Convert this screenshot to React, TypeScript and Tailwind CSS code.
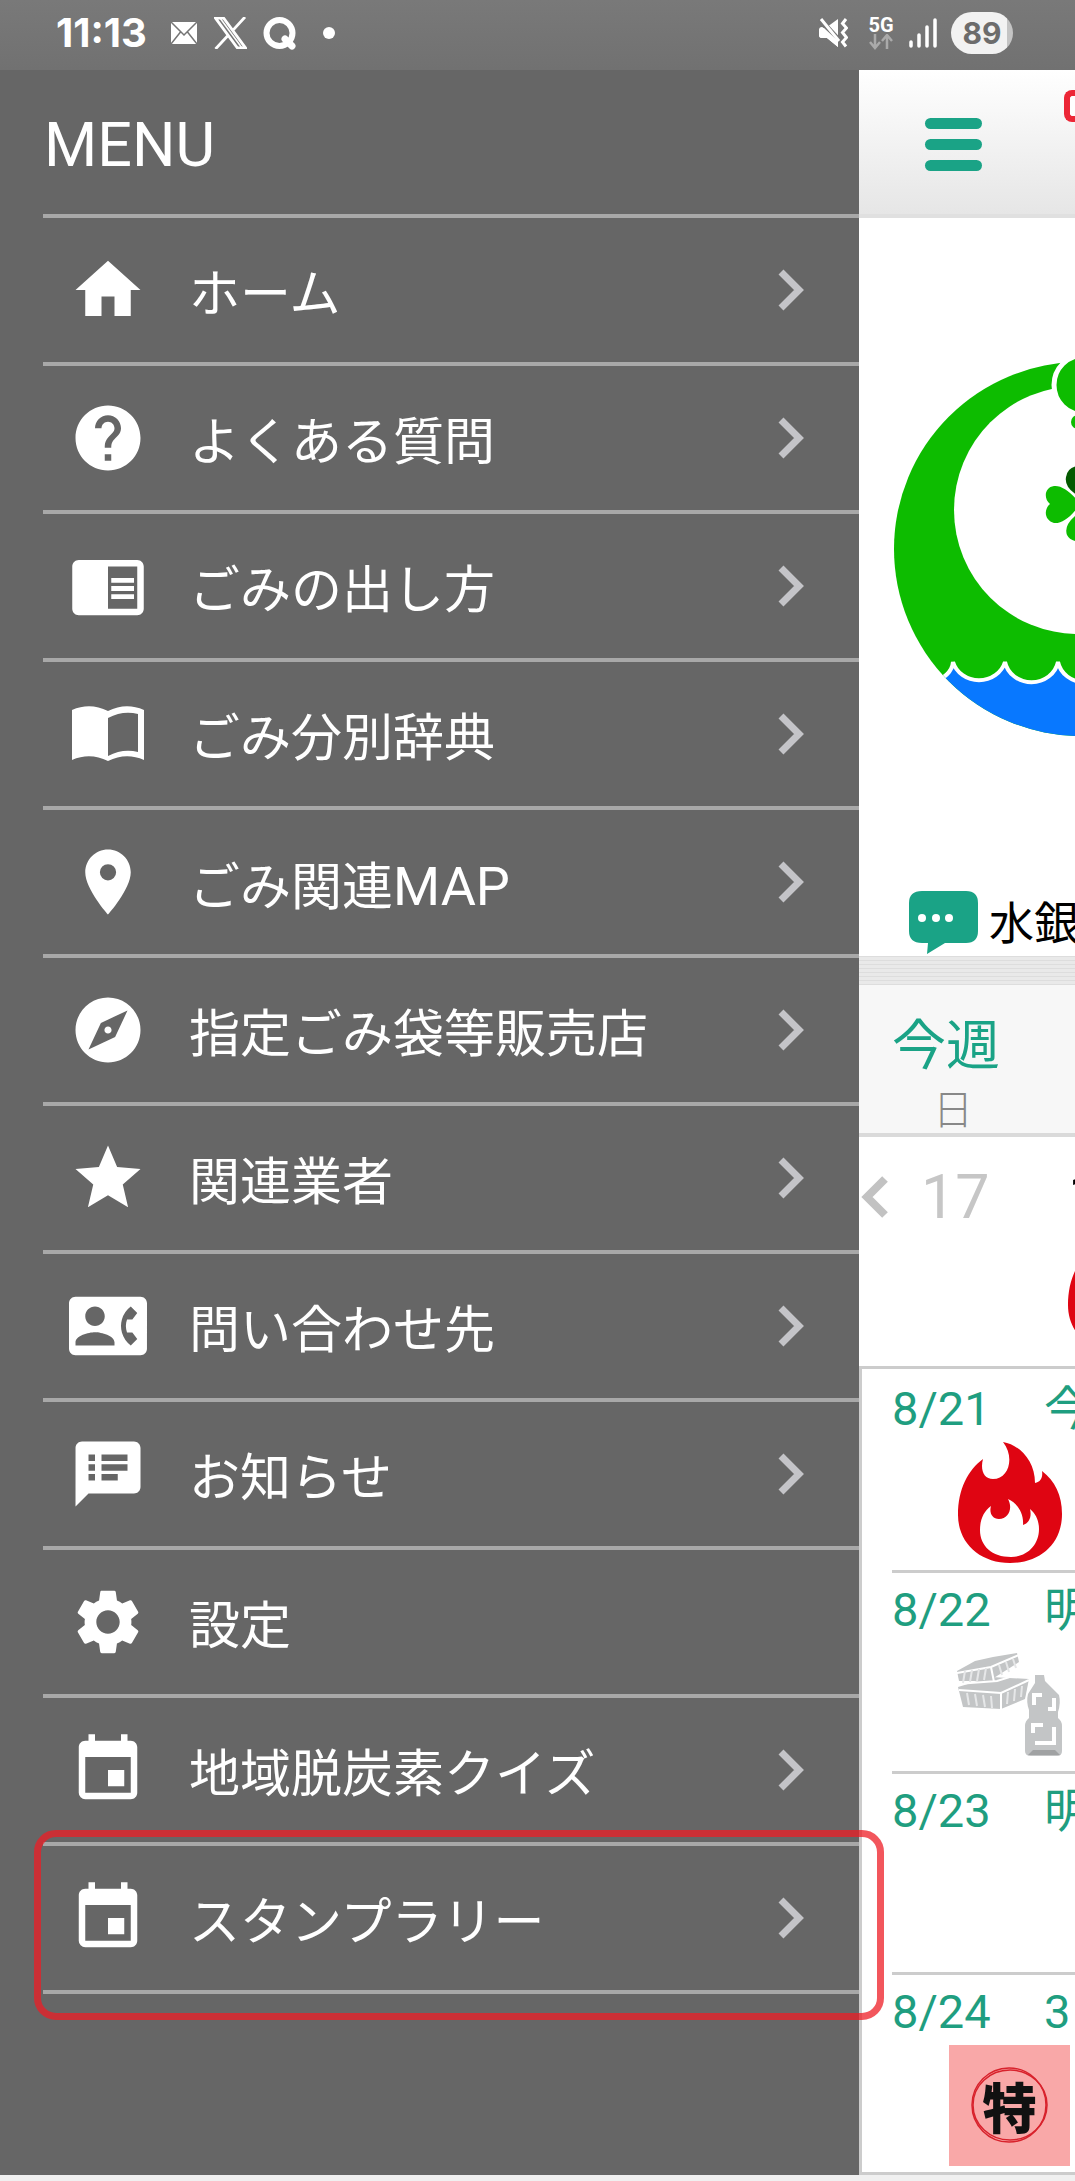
import type { ComponentType, ReactNode } from "react";
import {
  MdChromeReaderMode,
  MdContactPhone,
  MdEvent,
  MdExplore,
  MdHelp,
  MdHome,
  MdPlace,
  MdSettings,
  MdSpeakerNotes,
  MdStar,
} from "react-icons/md";

type MenuItem = {
  icon: ComponentType<{ className?: string }>;
  label: ReactNode;
  arrow?: boolean;
  highlight?: boolean;
};

// open book with the left page filled
const BookIcon = ({ className }: { className?: string }) => {
  return (
    <svg viewBox="-3 -11 78 78" className={className}>
      <path
        d="M0 4Q18 -4 36 5Q54 -4 72 4V54Q54 46 36 55Q18 46 0 54zM36 12V50Q51 42 66 46V8Q51 4 36 12z"
        fill="currentColor"
        fillRule="evenodd"
      />
    </svg>
  );
};

const menuItems: MenuItem[] = [
  { icon: MdHome, label: "ホーム" },
  { icon: MdHelp, label: "よくある質問" },
  { icon: MdChromeReaderMode, label: "ごみの出し方" },
  { icon: BookIcon, label: "ごみ分別辞典" },
  {
    icon: MdPlace,
    label: (
      <>
        ごみ関連<span className="text-[54px]">MAP</span>
      </>
    ),
  },
  { icon: MdExplore, label: "指定ごみ袋等販売店" },
  { icon: MdStar, label: "関連業者" },
  { icon: MdContactPhone, label: "問い合わせ先" },
  { icon: MdSpeakerNotes, label: "お知らせ" },
  { icon: MdSettings, label: "設定", arrow: false },
  { icon: MdEvent, label: "地域脱炭素クイズ" },
  { icon: MdEvent, label: "スタンプラリー", highlight: true },
];

const StatusBar = () => {
  return (
    <header className="flex h-[70px] items-center bg-linear-to-b from-[#797979] to-[#717171] pb-1 pl-14 pr-[62px] text-white">
      <time className="font-['Inter',sans-serif] text-[40px] leading-none font-bold">
        11:13
      </time>
      <svg viewBox="0 0 26 22" className="ml-6 h-[22px] w-[26px]">
        <path d="M0 0h26v22H0z" fill="#fff" />
        <path
          d="M0 0l13 13L26 0M0 22l9.500-12M26 22l-9.500-12"
          fill="none"
          stroke="#757575"
          strokeWidth="1.500"
        />
      </svg>
      <svg viewBox="0 0 33 32" className="ml-[17px] h-8 w-[33px]">
        <path
          d="M1.500 1.200h8.200l21.800 29.600h-8.200zM31 0L18.600 13.600M14.200 18.200L1.500 32"
          fill="none"
          stroke="#fff"
          strokeWidth="2.800"
        />
        <path d="M6 1l22 30" stroke="#fff" strokeWidth="1.500" />
      </svg>
      <svg viewBox="0 0 33 33" className="ml-4 h-[33px] w-[33px]">
        <circle
          cx="16.500"
          cy="16"
          r="13"
          fill="none"
          stroke="#fff"
          strokeWidth="6"
        />
        <path
          d="M22 22l7 7"
          stroke="#fff"
          strokeWidth="7"
          strokeLinecap="round"
        />
      </svg>
      <span className="ml-[27px] h-3 w-3 rounded-full bg-white" />

      <svg viewBox="0 0 30 30" className="ml-auto h-[30px] w-[30px]">
        <path d="M1 12q0-3 3-3h5L20 1v28L9 20H4q-3 0-3-3z" fill="#fff" />
        <path d="M1 1l22 24" stroke="#757575" strokeWidth="6" />
        <path d="M3 1l18 22" stroke="#fff" strokeWidth="3" />
        <path d="M1 12q2-3 5-2l14 13v6L9 20H4q-3 0-3-3z" fill="#fff" />
        <path
          d="M28 1l-3.500 4.500 4 4.500-4 4.500 4 5-4 4.500 3.500 4.500"
          fill="none"
          stroke="#fff"
          strokeWidth="3"
        />
      </svg>
      <div className="ml-5 flex w-[26px] flex-col items-center">
        <span className="font-['Roboto',sans-serif] text-[20px] leading-[18px] font-bold">
          5G
        </span>
        <svg viewBox="0 0 24 16" className="h-4 w-6">
          <path
            d="M6 0v14M1 8l5 6 5-6M18 15V1M13 7l5-6 5 6"
            fill="none"
            stroke="#aaa"
            strokeWidth="2.500"
          />
        </svg>
      </div>
      <svg viewBox="0 0 28 30" className="ml-[15px] h-[30px] w-7">
        <path
          d="M2 24v4M10 17v11M18 9v19M26 2v26"
          stroke="#fff"
          strokeWidth="3.500"
          strokeLinecap="round"
        />
      </svg>
      <span className="ml-[14px] flex h-[42px] w-[62px] items-center justify-center rounded-full bg-linear-to-r from-[#f2f2f2] from-90% to-[#c4c4c4] to-90% font-['Inter',sans-serif] text-[30px] leading-none font-bold text-[#6c6c6c]">
        89
      </span>
    </header>
  );
};

const MenuRow = ({ icon: Icon, label, arrow = true, highlight }: MenuItem) => {
  return (
    <li className="relative border-b-4 border-[#a8a8a8]">
      <a href="#" className="flex h-36 items-center pl-[26px] pr-[54px]">
        <Icon className="h-[78px] w-[78px] shrink-0" />
        <span className="ml-[42px] flex-1 pt-[10px] text-[51px] leading-[60px] whitespace-nowrap">
          {label}
        </span>
        {arrow && (
          <svg viewBox="0 0 28 42" className="h-[42px] w-7">
            <path
              d="M4 3l18 18L4 39"
              fill="none"
              stroke="#c4c4c8"
              strokeWidth="7"
            />
          </svg>
        )}
      </a>
      {highlight && (
        <span className="pointer-events-none absolute -top-4 -right-[25px] -bottom-[30px] -left-[9px] rounded-[22px] border-7 border-[#ed1e26]/75" />
      )}
    </li>
  );
};

const CityLogo = () => {
  return (
    <svg viewBox="859 218 216 669" className="h-[669px] w-full">
      <defs>
        <clipPath id="disc">
          <circle cx="1081" cy="549" r="187" />
        </clipPath>
      </defs>
      <g clipPath="url(#disc)">
        <path d="M880 350h200v400H880z" fill="#0dbc00" />
        <path
          d="M930 684Q952 676 953 662A27 25 0 0 0 1005 662A27 25 0 0 0 1058 662A27 25 0 0 0 1111 662V760H930z"
          fill="#0878ff"
          stroke="#fff"
          strokeWidth="4"
        />
      </g>
      <circle cx="1078" cy="510" r="124" fill="#fff" />
      <circle
        cx="1084"
        cy="385"
        r="30"
        fill="#0dbc00"
        stroke="#fff"
        strokeWidth="5"
      />
      <circle cx="1078" cy="422" r="7" fill="#0dbc00" />
      <path
        d="M1080 504C1072 516 1062 524 1054 523C1045 521 1043 510 1050 504C1043 498 1045 487 1054 486C1062 485 1072 493 1080 504z"
        fill="#0dbc00"
      />
      <path d="M1080 497Q1064 488 1066 477Q1068 466 1080 466z" fill="#045a00" />
      <path d="M1080 512Q1063 524 1067 535Q1070 541 1080 542z" fill="#0dbc00" />
    </svg>
  );
};

const Flame = () => {
  return (
    <svg viewBox="0 0 104 121" className="h-[121px] w-[104px] shrink-0">
      <path
        d="M45 0C62 3 77 19 77 41C83 40 85 35 84 29C97 39 104 53 104 72C104 102 82 121 52 121C22 121 0 101 0 73C0 47 10 28 25 17C22 28 26 37 35 37C51 37 57 15 45 0z"
        fill="#df0512"
      />
      <path
        d="M50 57C59 61 66 71 65 83C71 81 74 75 72 67C78 72 81 79 81 87C81 103 69 115 53 115C34 115 22 104 22 88C22 77 26 69 33 64C31 71 34 77 41 77C51 77 55 66 50 57z"
        fill="#fff"
      />
    </svg>
  );
};

const Plastics = () => {
  return (
    <svg viewBox="0 0 121 121" className="h-[121px] w-[121px]">
      <g fill="#c3c5c6">
        <path d="M8 28L26 18 44 14 68 10 70 19 40 38 10 38z" />
        <path d="M9 44L42 34 80 36 76 56 52 66 14 64z" />
        <path d="M86 32h9l1 6 14 14q2 8-1 17v6q4 3 4 8v25q0 5-5 5H82q-6 0-6-5V83q0-5 4-8v-8q-3-8-1-16l7-11z" />
      </g>
      <path
        d="M8 30l34-6 28-12M42 24l3 15M8 41l40-3 32-10M10 47l42 3 28-13M52 50v18"
        fill="none"
        stroke="#fff"
        strokeWidth="2"
      />
      <path
        d="M16 28l-2 12M23 27l-2 12M30 26l-2 12M37 25l-2 12M50 22l3 10M57 19l3 10M64 16l3 9M18 50l2 12M26 51l2 12M34 52l2 12M42 53l1 12M59 49l-1 12M66 46l-1 12M73 43l-1 11"
        stroke="#e6e7e8"
        strokeWidth="2"
      />
      <path
        d="M85 62V52h8M99 66h6V55M84 90v-8h10M86 100h19V84"
        fill="none"
        stroke="#fff"
        strokeWidth="4"
      />
      <path d="M84 107h22l5 5H79z" fill="#a0a2a3" />
    </svg>
  );
};

const Special = () => {
  return (
    <div className="relative flex h-[121px] w-[121px] items-center justify-center bg-[#f9a8a8]">
      <svg viewBox="0 0 121 121" className="absolute inset-0">
        <g fill="none" stroke="#d8222c">
          <circle cx="60" cy="60" r="37" strokeWidth="1.500" />
          <ellipse cx="61" cy="60" rx="37" ry="35" strokeWidth="1.500" />
        </g>
      </svg>
      <span className="relative font-['Noto_Sans_CJK_JP',sans-serif] text-[54px] leading-none font-black text-[#111]">
        特
      </span>
    </div>
  );
};

const days = [
  { date: "8/21", note: "今日", picture: <Flame /> },
  { date: "8/22", note: "明日", picture: <Plastics /> },
  { date: "8/23", note: "明後日", picture: null },
  { date: "8/24", note: "3日後", picture: <Special /> },
];

const HomePage = () => {
  return (
    <main className="flex w-[216px] shrink-0 flex-col overflow-hidden bg-white whitespace-nowrap">
      <div className="flex h-[148px] items-center justify-between border-b-4 border-[#e0e0e0] bg-linear-to-b from-white to-[#e6e6e6] pt-1 pl-[66px]">
        <button type="button" aria-label="menu" className="flex flex-col gap-[10px]">
          <span className="h-[11px] w-[57px] rounded-full bg-[#1aa386]" />
          <span className="h-[11px] w-[57px] rounded-full bg-[#1aa386]" />
          <span className="h-[11px] w-[57px] rounded-full bg-[#1aa386]" />
        </button>
        <span className="mb-[76px] h-8 w-[11px] rounded-l-lg border-6 border-r-0 border-[#ec2636] bg-white" />
      </div>

      <div className="h-[669px]">
        <CityLogo />
      </div>

      <div className="flex h-[69px] items-center pt-1 pl-[50px]">
        <svg viewBox="0 0 70 65" className="h-[65px] w-[70px] shrink-0">
          <path
            d="M13 0h44q12 0 12 12v28q0 12-12 12H36L18 63l1-11h-6Q0 52 0 40V12Q0 0 13 0z"
            fill="#1aa386"
          />
          <circle cx="13" cy="27" r="4" fill="#fff" />
          <circle cx="27" cy="27" r="4" fill="#fff" />
          <circle cx="40" cy="27" r="4" fill="#fff" />
        </svg>
        <span className="ml-[10px] pt-[2px] text-[45px] leading-none text-black">
          水銀
        </span>
      </div>

      <div className="h-[29px] bg-[repeating-linear-gradient(#dddddd_0px_1px,#e9e9e9_1px_4px)]" />

      <div className="flex h-[152px] flex-col border-b-4 border-[#dadada] bg-[#f7f7f7] pt-[30px]">
        <h2 className="pl-[33px] text-[54px] leading-[64px] text-[#1aa386]">
          今週
        </h2>
        <span className="pt-3 pl-[74px] text-[40px] leading-[40px] font-light text-[#888]">
          日
        </span>
      </div>

      <div className="flex h-[229px] items-start">
        <button type="button" aria-label="prev" className="mt-[39px] ml-[2px]">
          <svg viewBox="0 0 27 42" className="h-[42px] w-[27px]">
            <path
              d="M24 3L6 21l18 18"
              fill="none"
              stroke="#c2c2c2"
              strokeWidth="8"
            />
          </svg>
        </button>
        <span className="mt-[25px] ml-[33px] w-[147px] shrink-0 text-[61px] leading-[70px] text-[#c6c6c6]">
          17
        </span>
        <div className="flex flex-col">
          <span className="mt-[25px] text-[61px] leading-[70px] text-black">
            18
          </span>
          <Flame />
        </div>
      </div>

      <ul className="border-y-3 border-l-3 border-[#ccc] pt-[3px]">
        {days.map((day, i) => (
          <li
            key={day.date}
            className={
              i < days.length - 1
                ? "ml-[30px] h-[201px] border-b-3 border-[#ccc]"
                : "ml-[30px] h-[197px]"
            }
          >
            <div className="flex h-[70px] items-center pt-[2px] text-[47px] leading-none text-[#1f9e80]">
              <span className="w-[152px] shrink-0">{day.date}</span>
              <span>{day.note}</span>
            </div>
            <div className="ml-[57px] flex h-[121px] w-[121px] justify-center">
              {day.picture}
            </div>
          </li>
        ))}
      </ul>
      <div className="flex-1 bg-[#f0f0f0]" />
    </main>
  );
};

const App = () => {
  return (
    <div className="flex min-h-screen flex-col overflow-hidden font-['Roboto','Noto_Sans_CJK_JP',sans-serif]">
      <StatusBar />
      <div className="flex flex-1">
        <aside className="relative z-10 flex flex-1 flex-col bg-[#f0f0f0] pb-[6px] text-white">
          <nav className="flex-1 bg-[#666] pl-[43px]">
            <h1 className="flex h-[148px] items-center border-b-4 border-[#a8a8a8] pt-[6px] pl-px text-[61px] leading-none">
              MENU
            </h1>
            <ul>
              {menuItems.map((item, i) => (
                <MenuRow key={i} {...item} />
              ))}
            </ul>
          </nav>
        </aside>
        <HomePage />
      </div>
    </div>
  );
};

export default App;
